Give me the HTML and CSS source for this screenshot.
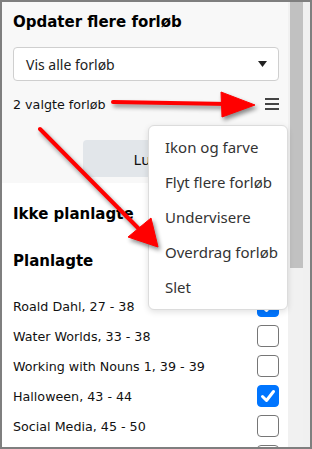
FILE: index.html
```html
<!DOCTYPE html>
<html lang="da">
<head>
<meta charset="utf-8">
<link rel="stylesheet" href="styles.css">
</head>
<body>
<div class="frame">
  <div class="panel">
    <div class="main">
      <div class="head">
        <h1 class="title">Opdater flere forløb</h1>
        <div class="select">
          <span>Vis alle forløb</span>
          <svg class="caret" width="9" height="6" viewBox="0 0 9 6"><path d="M0 0H9L4.5 6Z" fill="#222"/></svg>
        </div>
        <div class="selrow">
          <span>2 valgte forløb</span>
          <svg class="burger" width="16" height="14" viewBox="0 0 16 14"><path d="M1 2H15M1 7H15M1 12H15" stroke="#444" stroke-width="1.8"/></svg>
        </div>
        <div class="btn">Luk</div>
      </div>
      <div class="list">
        <h2 class="h2">Ikke planlagte</h2>
        <h2 class="h2 second">Planlagte</h2>
        <div class="rows">
          <div class="row"><span>Roald Dahl, 27 - 38</span><span class="cb checked"><svg width="20" height="20" viewBox="0 0 20 20"><path d="M4.5 10.5L8.5 14.5L15.5 5.5" fill="none" stroke="#fff" stroke-width="3" stroke-linecap="round" stroke-linejoin="round"/></svg></span></div>
          <div class="row"><span>Water Worlds, 33 - 38</span><span class="cb"></span></div>
          <div class="row"><span>Working with Nouns 1, 39 - 39</span><span class="cb"></span></div>
          <div class="row"><span>Halloween, 43 - 44</span><span class="cb checked"><svg width="20" height="20" viewBox="0 0 20 20"><path d="M4.5 10.5L8.5 14.5L15.5 5.5" fill="none" stroke="#fff" stroke-width="3" stroke-linecap="round" stroke-linejoin="round"/></svg></span></div>
          <div class="row"><span>Social Media, 45 - 50</span><span class="cb"></span></div>
          <div class="row"><span></span><span class="cb"></span></div>
        </div>
      </div>
    </div>
    <div class="scrollbar"><div class="thumb"></div></div>
  </div>

  <div class="menu">
    <div class="item">Ikon og farve</div>
    <div class="item">Flyt flere forløb</div>
    <div class="item">Undervisere</div>
    <div class="item">Overdrag forløb</div>
    <div class="item">Slet</div>
  </div>

  <svg class="arrows" width="312" height="449" viewBox="0 0 312 449">
    <g fill="#ff0000" stroke="#ff0000">
      <path d="M113 102L228 104" stroke-width="4" stroke-linecap="round" fill="none"/>
      <path d="M221 92L255 105L222 117Z" stroke-width="1" stroke-linejoin="round"/>
      <path d="M40 129L142 232" stroke-width="4" stroke-linecap="round" fill="none"/>
      <path d="M151 218L158 247L128 237Z" stroke-width="1" stroke-linejoin="round"/>
    </g>
  </svg>
</div>
</body>
</html>
```
FILE: styles.css
```css
html, body {
  margin: 0;
  padding: 0;
  background: #fff;
}
.frame {
  position: relative;
  width: 312px;
  height: 449px;
  box-sizing: border-box;
  border: 2px solid #7f7f7f;
  background: #f0f0f0;
  padding-right: 7px;
  overflow: hidden;
  font-family: "DejaVu Sans", sans-serif;
  color: #111;
}
.panel {
  display: flex;
  width: 301px;
  height: 100%;
}
.main {
  width: 286px;
  height: 100%;
  overflow: hidden;
  background: #fff;
}
.scrollbar {
  width: 15px;
  height: 100%;
  box-sizing: border-box;
  padding-left: 2px;
  background: #f1f1f1;
}
.thumb {
  height: 266px;
  background: #c1c1c1;
}
.head {
  background: #f8f8f8;
  padding: 10px 9px 6px 11px;
}
.title {
  margin: 0;
  font-size: 15px;
  line-height: 20px;
  font-weight: bold;
  color: #000;
}
.select {
  margin-top: 15px;
  height: 34px;
  box-sizing: border-box;
  border: 1px solid #cfcfcf;
  border-radius: 4px;
  background: #fff;
  display: flex;
  align-items: center;
  justify-content: space-between;
  padding: 0 11px 0 12px;
  font-family: "Noto Sans", sans-serif;
  font-size: 14px;
  color: #222;
}
.selrow {
  margin-top: 11px;
  height: 24px;
  display: flex;
  align-items: center;
  justify-content: space-between;
  font-size: 12.7px;
}
.burger {
  margin-right: -1px;
}
.btn {
  margin: 24px auto 0;
  width: 126px;
  height: 37px;
  border-radius: 4px;
  background: #e2e6ea;
  display: flex;
  align-items: center;
  justify-content: center;
  font-family: "Noto Sans", sans-serif;
  font-size: 15px;
  color: #111;
}
.list {
  padding: 21px 9px 0 11px;
}
.h2 {
  margin: 0;
  font-size: 15px;
  line-height: 20px;
  font-weight: bold;
  color: #000;
}
.second {
  margin-top: 27px;
}
.rows {
  margin-top: 20px;
}
.row {
  height: 30px;
  display: flex;
  align-items: center;
  justify-content: space-between;
  font-size: 12.7px;
}
.cb {
  width: 22px;
  height: 22px;
  box-sizing: border-box;
  border: 1px solid #767676;
  border-radius: 4px;
  background: #fff;
  display: flex;
  align-items: center;
  justify-content: center;
}
.cb.checked {
  border-color: #0075ff;
  background: #0075ff;
}
.menu {
  position: absolute;
  left: 146px;
  top: 123px;
  width: 140px;
  box-sizing: border-box;
  padding: 4px 0;
  background: #fff;
  border: 1px solid #dcdcdc;
  border-radius: 6px;
  box-shadow: 0 2px 6px rgba(0, 0, 0, 0.12);
}
.item {
  height: 35px;
  line-height: 35px;
  padding-left: 16px;
  font-family: "Noto Sans", sans-serif;
  font-size: 15px;
  color: #333;
  white-space: nowrap;
}
.arrows {
  position: absolute;
  left: -2px;
  top: -2px;
  pointer-events: none;
  filter: drop-shadow(2px 3px 2px rgba(0, 0, 0, 0.45));
}
```
